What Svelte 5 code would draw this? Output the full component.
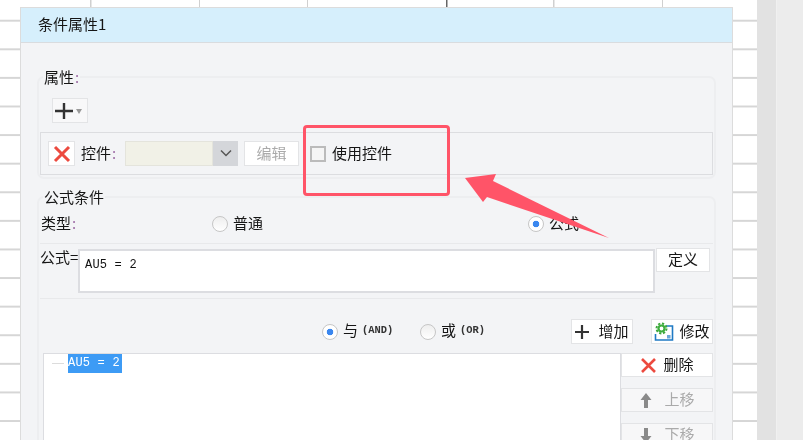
<script>
  const sideButtons = [
    { label: '删除', icon: 'x', off: false },
    { label: '上移', icon: 'up', off: true },
    { label: '下移', icon: 'down', off: true }
  ];
</script>

<div class="page">
  <div class="sheet">
    <section class="dialog">
      <header class="title">条件属性1</header>
      <div class="body">
        <fieldset class="group">
          <legend>属性<i>:</i></legend>
          <button class="btn add">
            <svg width="22" height="22" viewBox="0 0 22 22"><path d="M11 3v16M2 11h18" stroke="#333" stroke-width="2.4" fill="none"/></svg>
            <span class="caret"></span>
          </button>
          <div class="control-row">
            <button class="btn del">
              <svg width="20" height="20" viewBox="0 0 20 20"><path d="M3 3l14 14M17 3L3 17" stroke="#ec4a3f" stroke-width="3" fill="none"/></svg>
            </button>
            <span class="lbl">控件<i>:</i></span>
            <div class="select">
              <span class="select-field"></span>
              <span class="select-arrow">
                <svg width="14" height="9" viewBox="0 0 14 9"><path d="M2 1.500l5 5 5-5" stroke="#555" stroke-width="1.500" fill="none"/></svg>
              </span>
            </div>
            <button class="btn edit">编辑</button>
            <span class="check"></span>
            <span class="check-text">使用控件</span>
          </div>
        </fieldset>

        <fieldset class="group second">
          <legend>公式条件</legend>
          <div class="type-row">
            <span class="type-label">类型<i>:</i></span>
            <label class="opt first"><span class="radio"></span>普通</label>
            <label class="opt"><span class="radio on"></span>公式</label>
          </div>
          <div class="formula-row">
            <span class="formula-label">公式=</span>
            <div class="formula-input">AU5 = 2</div>
            <button class="btn define">定义</button>
          </div>
          <div class="logic-row">
            <label class="opt and"><span class="radio on"></span>与<em>(AND)</em></label>
            <label class="opt or"><span class="radio"></span>或<em>(OR)</em></label>
            <button class="btn action plus">
              <svg width="18" height="18" viewBox="0 0 18 18"><path d="M9 2v14M2 9h14" stroke="#333" stroke-width="2.2" fill="none"/></svg>
              增加
            </button>
            <button class="btn action modify">
              <svg width="20" height="20" viewBox="0 0 20 20">
                <path d="M12 4h6.500v14H1.500v-6" stroke="#1f7ac4" stroke-width="1.600" fill="none"/>
                <circle cx="7.500" cy="6.500" r="5" fill="none" stroke="#3ca83c" stroke-width="2" stroke-dasharray="2.200 1.700"/>
                <circle cx="7.500" cy="6.500" r="3" fill="none" stroke="#3fae3f" stroke-width="2.200"/>
                <rect x="13" y="13" width="3.500" height="3.500" fill="#6aa6d8"/>
              </svg>
              修改
            </button>
          </div>
          <div class="list-row">
            <div class="list">
              <span class="dash"></span><span class="picked">AU5 = 2</span>
            </div>
            <div class="side">
              {#each sideButtons as b}
                <button class="btn side-btn" class:off={b.off}>
                  {#if b.icon === 'x'}
                    <svg width="17" height="17" viewBox="0 0 17 17"><path d="M2 2l13 13M15 2L2 15" stroke="#ec4a3f" stroke-width="2.600" fill="none"/></svg>
                  {:else if b.icon === 'up'}
                    <svg width="14" height="17" viewBox="0 0 14 17"><path d="M7 1L1.500 8H5v8h4V8h3.500z" fill="#8a8a8a"/></svg>
                  {:else}
                    <svg width="14" height="17" viewBox="0 0 14 17"><path d="M7 16L1.500 9H5V1h4v8h3.500z" fill="#8a8a8a"/></svg>
                  {/if}
                  {b.label}
                </button>
              {/each}
            </div>
          </div>
        </fieldset>
      </div>
    </section>

    <div class="red-box"></div>
    <svg class="arrow" width="803" height="440" viewBox="0 0 803 440">
      <path d="M465 178L496 174L493 181L609 238L487 197L483 202Z" fill="#ff5468"/>
    </svg>
  </div>
  <aside class="scroll"><span class="scroll-rail"></span></aside>
</div>

<style>
  :global(body) { margin: 0; background: #fff; }
  .page {
    display: flex;
    width: 803px;
    height: 440px;
    overflow: hidden;
    font-family: "Noto Sans CJK SC", "Liberation Sans", sans-serif;
    font-size: 15px;
    color: #151515;
    filter: blur(0.35px);
  }
  .sheet {
    position: relative;
    width: 757px;
    background-color: #fff;
    background-image:
      repeating-linear-gradient(to bottom, transparent 0, transparent 20px, #d6d6d6 20px, #d6d6d6 21.6px, transparent 21.6px, transparent 28.6px);
    background-size: 100% 28.6px;
  }
  .sheet::before {
    content: "";
    position: absolute;
    top: 0;
    left: 0;
    right: 0;
    height: 7px;
    background: #fff linear-gradient(to right, #d0d0d0, #d0d0d0) no-repeat 90px 0 / 1.5px 7px;
  }
  .sheet::after {
    content: "";
    position: absolute;
    top: 0;
    left: 199px;
    width: 462px;
    height: 7px;
    border-left: 1.5px solid #d0d0d0;
    border-right: 1.5px solid #d0d0d0;
    background:
      linear-gradient(#d0d0d0, #d0d0d0) no-repeat 107px 0 / 1px 7px,
      linear-gradient(#666, #666) no-repeat 246px 0 / 1.5px 7px,
      linear-gradient(#d0d0d0, #d0d0d0) no-repeat 353px 0 / 1.5px 7px;
  }
  .scroll {
    flex: 1;
    display: flex;
    background: #ececec;
  }
  .scroll-rail {
    width: 19px;
    background: #e2e2e2;
    border-right: 1px solid #f0f0f0;
  }
  .dialog {
    position: absolute;
    left: 20px;
    top: 7px;
    width: 711px;
    bottom: -2px;
    overflow: hidden;
    z-index: 1;
    background: #f3f4f6;
    border: 1px solid #dcdcdc;
  }
  .title {
    height: 34px;
    line-height: 32px;
    padding-left: 17px;
    background: #d6effc;
    border-bottom: 1px solid #d9dcdf;
  }
  .body { padding: 23px 16px 0; }
  i { font-style: normal; color: #a070a8; margin-left: 1px; }
  fieldset.group {
    margin: 0;
    padding: 0 1px 2px;
    border: 2px solid #edeef0;
    border-radius: 7px;
    min-width: 0;
  }
  fieldset.second { margin-top: 7px; }
  legend {
    margin-left: 3px;
    padding: 0 1px 1px;
    line-height: 21px;
  }
  .btn {
    display: flex;
    align-items: center;
    justify-content: center;
    box-sizing: border-box;
    padding: 0 0 3px;
    margin: 0;
    font: inherit;
    color: inherit;
    background: #fff;
    border: 1.5px solid #e3e4e6;
    border-radius: 0;
  }
  .btn svg { margin-top: 3px; }
  .add {
    width: 36px;
    height: 25px;
    margin: 10px 0 0 12px;
    background: #f8f8f9;
    gap: 1px;
    justify-content: flex-start;
    padding: 0;
  }
  .add svg, .del svg { margin-top: 0; }
  .caret {
    width: 0;
    height: 0;
    border-left: 3.5px solid transparent;
    border-right: 3.5px solid transparent;
    border-top: 5px solid #999;
    margin-top: 2px;
  }
  .control-row {
    display: flex;
    align-items: center;
    height: 43px;
    box-sizing: border-box;
    margin-top: 9px;
    padding-left: 7px;
    border: 1.5px solid #dcdde0;
  }
  .del { width: 27px; height: 25px; padding: 0; }
  .lbl { margin-left: 6px; width: 44px; padding-bottom: 3px; }
  .select {
    display: flex;
    width: 113px;
    height: 25px;
  }
  .select-field { flex: 1; background: #f1f1e7; border: 1px solid #e4e4dc; }
  .select-arrow {
    display: flex;
    align-items: center;
    justify-content: center;
    width: 25px;
    background: #d4d6da;
  }
  .edit { width: 55px; height: 25px; margin-left: 6px; color: #aaa; }
  .check {
    box-sizing: border-box;
    width: 16px;
    height: 16px;
    margin-left: 11px;
    background: #f5f5f5;
    border: 2px solid #bbb;
  }
  .check-text { margin-left: 6px; padding-bottom: 3px; }
  .type-row {
    display: flex;
    align-items: center;
    height: 32px;
    box-sizing: border-box;
    margin-bottom: 3px;
    padding: 0 0 4px 1px;
  }
  .type-label { width: 171px; }
  .opt { display: flex; align-items: center; }
  .opt.first { width: 316px; }
  .radio {
    box-sizing: border-box;
    width: 16px;
    height: 16px;
    margin: 4px 5px 0 0;
    border-radius: 50%;
    border: 1.5px solid #c6c6c6;
    background: linear-gradient(#eee, #fff);
  }
  .radio.on {
    background: radial-gradient(circle, #3b87ef 0 3px, #fff 3.6px);
  }
  .formula-row {
    display: flex;
    align-items: flex-start;
    padding: 5px 0;
    border-top: 1.5px solid #e8e9eb;
    border-bottom: 1.5px solid #e8e9eb;
  }
  .formula-label {
    width: 38px;
    line-height: 17px;
    margin-top: -1px;
    white-space: nowrap;
  }
  .formula-input {
    box-sizing: border-box;
    width: 577px;
    height: 44px;
    padding: 5px 5px 0;
    background: #fff;
    border: 2.5px solid #dcdde1;
    font: 12px/18px "Liberation Mono", monospace;
    letter-spacing: 0.2px;
    color: #111;
  }
  .define { width: 54px; height: 24px; margin: -1px 0 0 1px; }
  .logic-row {
    display: flex;
    align-items: center;
    height: 25px;
    margin-top: 20px;
    padding-left: 282px;
  }
  .logic-row .opt { padding-bottom: 4px; }
  .opt em {
    font: bold 10.4px "Liberation Mono", monospace;
    margin-left: 4px;
    color: #333;
  }
  .and { width: 98px; }
  .or { width: 151px; }
  .action { height: 25px; width: 62px; gap: 7px; }
  .plus { padding-right: 2px; }
  .modify { margin-left: 18px; gap: 5px; }
  .list-row {
    display: flex;
    align-items: flex-start;
    margin-top: 9px;
    padding-left: 3px;
  }
  .list {
    display: flex;
    align-items: flex-start;
    box-sizing: border-box;
    width: 578px;
    height: 110px;
    padding-left: 8px;
    background: #fff;
    border: 1.5px solid #dcdde1;
    border-bottom: 0;
  }
  .dash { width: 12px; margin: 9px 4px 0 0; border-top: 1px solid #dcdcdc; }
  .picked {
    padding-right: 2px;
    height: 19px;
    font: 12px/18px "Liberation Mono", monospace;
    letter-spacing: 0.2px;
    background: #3d9bf5;
    color: #fff;
  }
  .side {
    display: flex;
    flex-direction: column;
    gap: 11px;
    width: 92px;
  }
  .side-btn { height: 24px; gap: 6px; }
  .side-btn.off { color: #aaa; background: #f7f7f8; gap: 11px; }
  .red-box {
    position: absolute;
    z-index: 2;
    left: 303px;
    top: 125px;
    width: 147px;
    height: 71px;
    box-sizing: border-box;
    border: 3px solid #ff5468;
    border-radius: 4px;
  }
  .arrow {
    position: absolute;
    z-index: 2;
    left: 0;
    top: 0;
  }
</style>
